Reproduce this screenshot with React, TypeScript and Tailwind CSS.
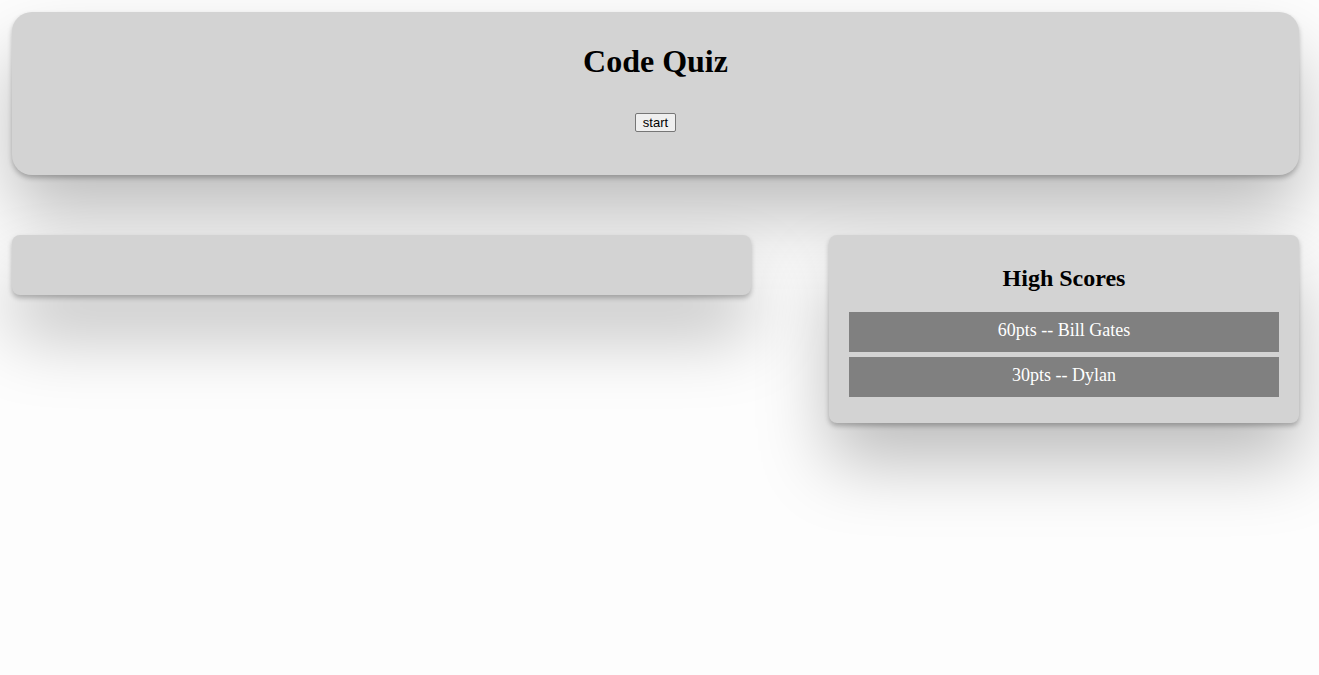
const scores = [
  { pts: 60, name: 'Bill Gates' },
  { pts: 30, name: 'Dylan' },
]

const shadow = 'shadow-[0_3px_5px_rgba(0,0,0,0.25),0_40px_70px_rgba(0,0,0,0.25)]'

export default function App() {
  return (
    <div className="min-h-[675px] bg-[#fdfdfd] pt-3 pr-5 pl-3 font-['Liberation_Serif',serif] text-black">
      <header className={`flex h-[163px] flex-col items-center rounded-[20px] bg-[#d3d3d3] pt-[31px] ${shadow}`}>
        <h1 className="text-[32px] font-bold leading-[37px]">Code Quiz</h1>
        <button className="mt-[33px] h-[19px] rounded-[2px] border border-[#767676] bg-[#efefef] px-[7px] font-['Liberation_Sans',sans-serif] text-[13px] leading-[15px] text-black">
          start
        </button>
      </header>

      <div className="mt-[60px] flex items-start justify-between">
        <div className={`h-[60px] w-[739px] rounded-lg bg-[#d3d3d3] ${shadow}`}></div>

        <div className={`w-[470px] rounded-lg bg-[#d3d3d3] px-5 pt-[29px] pb-[26px] ${shadow}`}>
          <h2 className="text-center text-[24px] font-bold leading-[28px]">High Scores</h2>
          <ul className="mt-5 flex flex-col gap-[5px]">
            {scores.map((s, i) => (
              <li key={i} className="flex h-10 items-center justify-center bg-[#808080] pb-1 text-[18px] text-white">
                {s.pts}pts -- {s.name}
              </li>
            ))}
          </ul>
        </div>
      </div>
    </div>
  )
}
